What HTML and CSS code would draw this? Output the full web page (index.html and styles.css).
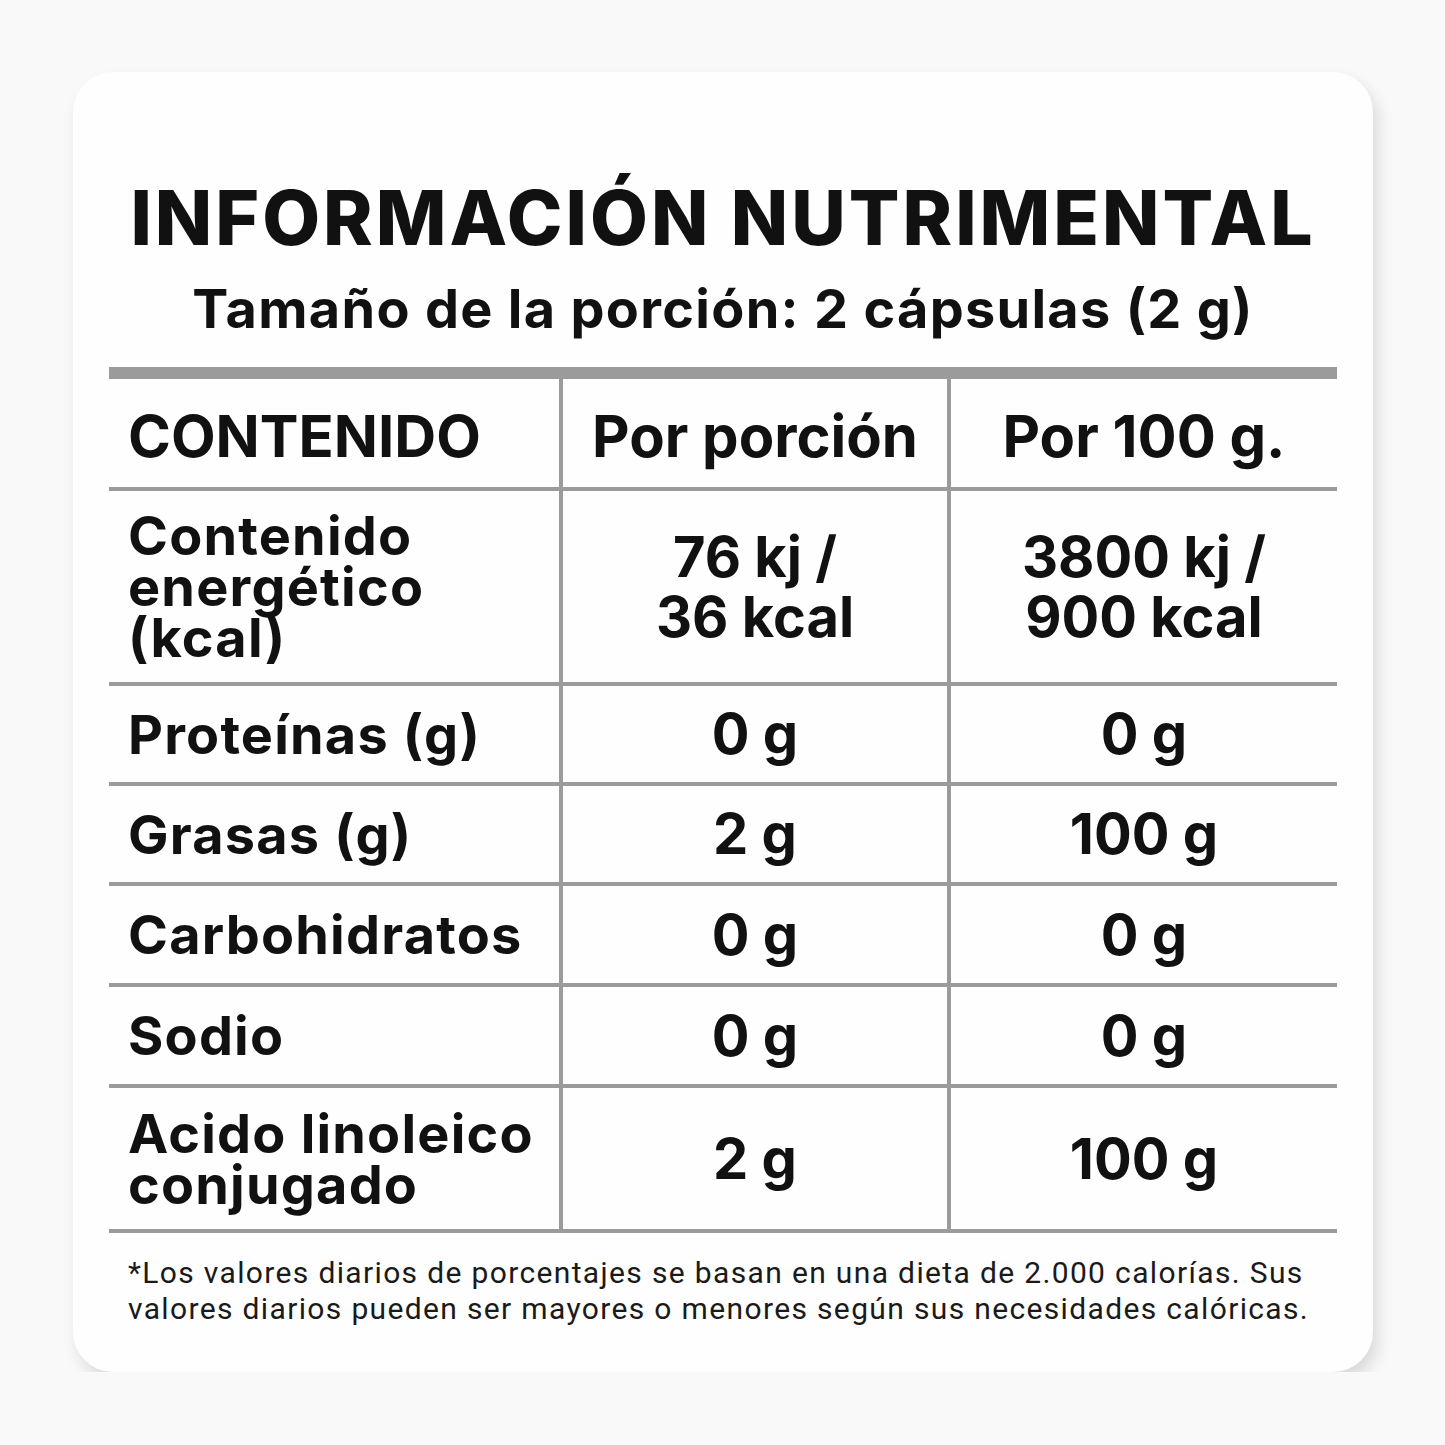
FILE: index.html
```html
<!DOCTYPE html>
<html lang="es">
<head>
    <meta charset="UTF-8">
    <meta name="viewport" content="width=device-width, initial-scale=1.0">
    <title>Información Nutrimental</title>
    <link rel="stylesheet" href="styles.css">
</head>
<body>
    <div class="card">
        <h1 class="title">INFORMACIÓN NUTRIMENTAL</h1>
        <div class="serving">Tamaño de la porción: 2 cápsulas (2 g)</div>

        <div class="facts">
            <div class="cell head label">CONTENIDO</div>
            <div class="cell head value">Por porción</div>
            <div class="cell head value">Por 100 g.</div>

            <div class="cell label multi">Contenido<br>energético<br>(kcal)</div>
            <div class="cell value multi">76 kj /<br>36 kcal</div>
            <div class="cell value multi">3800 kj /<br>900 kcal</div>

            <div class="cell label">Proteínas (g)</div>
            <div class="cell value">0 g</div>
            <div class="cell value">0 g</div>

            <div class="cell label">Grasas (g)</div>
            <div class="cell value">2 g</div>
            <div class="cell value">100 g</div>

            <div class="cell label">Carbohidratos</div>
            <div class="cell value">0 g</div>
            <div class="cell value">0 g</div>

            <div class="cell label">Sodio</div>
            <div class="cell value">0 g</div>
            <div class="cell value">0 g</div>

            <div class="cell label multi">Acido linoleico<br>conjugado</div>
            <div class="cell value">2 g</div>
            <div class="cell value">100 g</div>
        </div>

        <p class="note">*Los valores diarios de porcentajes se basan en una dieta de 2.000 calorías. Sus<br>valores diarios pueden ser mayores o menores según sus necesidades calóricas.</p>
    </div>
</body>
</html>
```

FILE: styles.css
```css
body {
    margin: 0;
    padding: 72px 72px 0 73px;
    background-color: #f9f9f9;
    font-family: Inter, "Liberation Sans", sans-serif;
    color: #111;
}
.card {
    width: 1300px;
    height: 1300px;
    box-sizing: border-box;
    background-color: #fefefe;
    border-radius: 40px;
    box-shadow: 5px 9px 16px rgba(0, 0, 0, 0.13);
    padding: 108px 36px 0 36px;
}
.title {
    margin: 0;
    font-size: 75px;
    font-weight: 800;
    line-height: 1;
    text-align: center;
    letter-spacing: 3px;
}
.serving {
    margin-top: 27px;
    font-size: 54px;
    font-weight: 700;
    line-height: 1;
    text-align: center;
    letter-spacing: 1.3px;
}
.facts {
    margin-top: 31px;
    border-top: 12px solid #9b9b9b;
    display: grid;
    grid-template-columns: 450px 388px 1fr;
    grid-template-rows: 112px 195px 100px 100px 101px 101px 145px;
}
.cell {
    box-sizing: border-box;
    border-bottom: 4px solid #9b9b9b;
    display: flex;
    align-items: center;
    font-weight: 700;
}
.cell.value {
    border-left: 4px solid #9b9b9b;
    justify-content: center;
    text-align: center;
    font-size: 56px;
    line-height: 60px;
}
.cell.label {
    padding-left: 19px;
    font-size: 54px;
    line-height: 51px;
    letter-spacing: 1.2px;
}
.cell.head {
    font-size: 58px;
    padding-top: 6px;
    letter-spacing: 0;
}
.note {
    margin: 22px 0 0 19px;
    font-family: Roboto, "Liberation Sans", sans-serif;
    font-size: 30px;
    line-height: 36px;
    letter-spacing: 1.35px;
    color: #1a1a1a;
}
```
